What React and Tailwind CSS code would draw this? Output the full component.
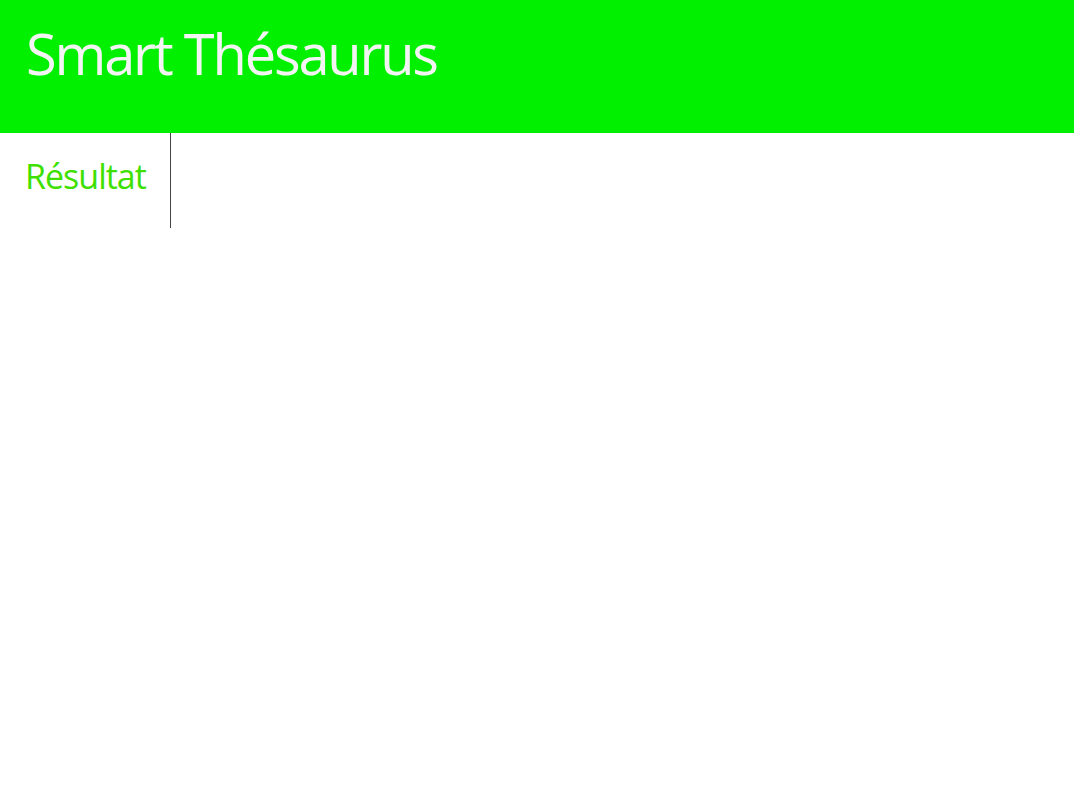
import React from 'react';

const App = () => {
  return (
    <div className="min-h-screen bg-white" style={{ fontFamily: '"Open Sans", "Noto Sans", sans-serif' }}>
      {/* Header */}
      <header className="h-[133px] bg-[#00f000] pl-[26px] pt-[19px]">
        <h1 className="text-[56px] leading-[68px] text-[#f4f4f4] tracking-[-2.2px]">Smart Thésaurus</h1>
      </header>

      {/* Tabs */}
      <div className="flex">
        <div className="w-[171px] h-[95px] border-r border-[#444] pl-[25px] pt-[21px]">
          <span className="text-[34px] leading-[44px] text-[#3ee000] tracking-[-1px]">Résultat</span>
        </div>
      </div>
    </div>
  );
};

export default App;
